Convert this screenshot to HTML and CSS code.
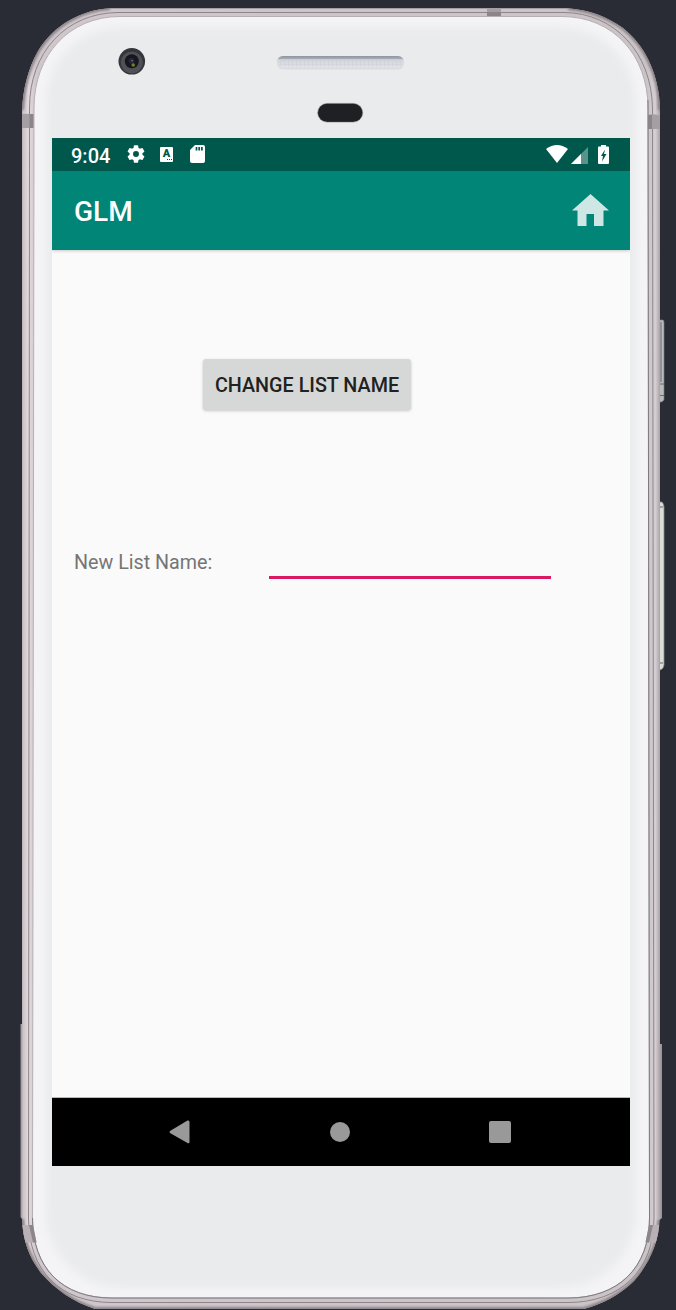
FILE: index.html
```html
<!DOCTYPE html>
<html lang="en">
<head>
<meta charset="utf-8">
<title>GLM</title>
<link rel="stylesheet" href="styles.css">
</head>
<body>
<main class="stage">
  <svg class="phone" viewBox="0 0 676 1310" aria-hidden="true">
    <defs>
      <linearGradient id="metal" x1="20" x2="662" y1="0" y2="0" gradientUnits="userSpaceOnUse">
        <stop offset="0" stop-color="#8f888d"/><stop offset=".005" stop-color="#cbc3c7"/><stop offset=".013" stop-color="#e3dadd"/><stop offset=".025" stop-color="#cfc7cb"/>
        <stop offset=".5" stop-color="#cdc4c8"/><stop offset=".976" stop-color="#cbc4c7"/><stop offset=".99" stop-color="#d5cdd1"/><stop offset="1" stop-color="#958e93"/>
      </linearGradient>
      <filter id="soft" x="-5%" y="-5%" width="110%" height="110%"><feGaussianBlur stdDeviation="4"/></filter>
      <filter id="edge" x="-5%" y="-5%" width="110%" height="110%"><feGaussianBlur stdDeviation="1.2"/></filter>
      <clipPath id="bodyClip"><path id="body" d="M110 8.300H568C590 10 607 17 623 28C634 37 642 47 648 59C655 73 660 91 660 110V1044H662V1218L659.500 1220C659 1242 649 1264 634 1281C620 1295 602 1304 584 1309H95C73 1302 55 1289 41 1273C29 1257 23 1241 22 1219L20.500 1217V1024H22V110C23 89 28 69 38 51C54 25 81 10 110 8.300Z"/></clipPath>
      <clipPath id="faceClip"><path d="M120 17H562C613 17 647.500 55 647.500 108L649 1218C649 1268 618 1297.500 568 1297.500H112C62 1297.500 33 1268 33 1218L34.500 108C34.500 55 69 17 120 17Z"/></clipPath>
      <linearGradient id="grille" x1="0" x2="0" y1="0" y2="1"><stop offset="0" stop-color="#8e959f"/><stop offset=".22" stop-color="#a5abb4"/><stop offset=".32" stop-color="#d3d5dc"/><stop offset="1" stop-color="#e2e3e8"/></linearGradient>
      <pattern id="mesh" width="4" height="4" patternUnits="userSpaceOnUse"><path d="M0 .5H4M.5 0V4" stroke="#ced0d8" stroke-width=".5"/></pattern>
    </defs>
    <path d="M657 320H663Q664 320 664 323V400Q662 403 657 402Z" fill="#b8bdbb" stroke="#777b7d" stroke-width=".7"/>
    <path d="M661 322V382M659.500 384H664M659.500 395.500H664" stroke="#656b6e"/>
    <path d="M657 502H662Q664 504 664 507V665Q663 671 657 670Z" fill="#d9ddd8" stroke="#85898a" stroke-width=".8"/>
    <path d="M659 507H663M659 663H663" stroke="#636467"/>
    <use href="#body" fill="url(#metal)"/>
    <g clip-path="url(#bodyClip)">
      <path d="M568 8C590 10 607 17 623 28C634 37 642 47 648 59C655 73 660 91 660 110M22 110C23 89 28 69 38 51C54 25 81 10 110 8M22 1219C23 1241 29 1257 41 1273C55 1289 73 1302 95 1309H584C602 1304 620 1295 634 1281C649 1264 659 1242 659.500 1220" fill="none" stroke="#8c8388" stroke-width="4" filter="url(#edge)"/>
    </g>
    <path d="M118 12.500H564C615 13 651.500 53 652.500 108L654 1218C654 1271 620 1302.500 568 1302.500H112C60 1302.500 28.500 1271 28.500 1218L29.500 108C29.500 52 66 13 118 12.500Z" fill="none" stroke="#8c858b"/>
    <path d="M120 16.500H562C613 16.500 648 55 648 108L649.500 1218C649.500 1268 618 1298 568 1298H112C62 1298 32.500 1268 32.500 1218L34 108C34 55 69 16.500 120 16.500Z" fill="#f4f4f6" stroke="#b5aeb3"/>
    <path d="M648 100L649.500 1218C649.500 1268 618 1298 568 1298H112C62 1298 32.500 1268 32.500 1218" fill="none" stroke="#77747a" stroke-width=".9"/>
    <g clip-path="url(#faceClip)"><rect x="46" y="27" width="590" height="1261" rx="76" fill="#eaebed" filter="url(#soft)"/></g>
    <g clip-path="url(#bodyClip)">
      <path d="M22 114Q28 113 33 115V128H22ZM648 115Q653 113 661 116V129H648ZM487 9H501V16H487Z" fill="#a59fa4"/>
      <path d="M29.500 114H33.500V128H29.500ZM648 115H652V129H648ZM487 12H501V16H487Z" fill="#8b858a"/>
      <path d="M20 1225H33L36.500 1242.500H20ZM662 1225H649L645.500 1242.500H662Z" fill="#b8b0b5"/>
      <path d="M29 1225H33L36.500 1242.500H33ZM653 1225H649L645.500 1242.500H649Z" fill="#8d858a"/>
    </g>
    <circle cx="131.800" cy="61.300" r="13.300" fill="#34363b"/>
    <circle cx="131.800" cy="62.500" r="10.800" fill="#505157"/>
    <circle cx="131.800" cy="61.300" r="7" fill="#15171c"/>
    <circle cx="131.500" cy="60.700" r="3" fill="#242638"/>
    <circle cx="133.200" cy="65" r="1.800" fill="#777b25"/>
    <path d="M131 60.500L133 61" stroke="#65718d"/>
    <rect x="277" y="57" width="127" height="12.500" rx="6" fill="#dadcdf"/>
    <rect x="277" y="56" width="127" height="11.500" rx="5.750" fill="url(#grille)"/>
    <rect x="279" y="60" width="123" height="6.500" rx="3" fill="url(#mesh)"/>
    <rect x="317.700" y="103.400" width="45" height="18.700" rx="9.350" fill="#1e2023" stroke="#77797b" stroke-width=".5"/>
  </svg>
  <section class="screen">
    <header class="status">
      <span class="time">9:04</span>
      <svg class="gear" viewBox="2 2 20 20"><path fill="#fff" d="M19.140 12.940a7.500 7.500 0 0 0 0-1.880l2.030-1.580a.5.5 0 0 0 .12-.61l-1.920-3.320a.5.5 0 0 0-.59-.22l-2.390.96a7 7 0 0 0-1.620-.94l-.36-2.540A.5.500 0 0 0 13.920 2.400h-3.840a.5.5 0 0 0-.48.410l-.36 2.540a7 7 0 0 0-1.620.94l-2.390-.96a.5.5 0 0 0-.59.220L2.720 8.870a.5.5 0 0 0 .12.610l2.030 1.580a7.500 7.500 0 0 0 0 1.880l-2.030 1.580a.5.5 0 0 0-.12.610l1.920 3.320c.12.220.37.290.59.220l2.390-.96c.5.380 1.030.7 1.620.94l.36 2.540c.05.240.24.410.48.410h3.840c.24 0 .44-.17.47-.41l.36-2.540a7 7 0 0 0 1.620-.94l2.390.96c.22.080.47 0 .59-.22l1.920-3.320a.5.5 0 0 0-.12-.61ZM12 15.300a3.300 3.300 0 1 1 0-6.600 3.300 3.300 0 0 1 0 6.600Z"/></svg>
      <span class="keyboard"><b>A</b><svg viewBox="0 0 13 2"><path d="M7 .5H8M9 .5H10M11 .5H12" stroke="#00574b"/></svg></span>
      <svg class="card" viewBox="0 0 15 18"><path d="M5 0H13Q15 0 15 2V16Q15 18 13 18H2Q0 18 0 16V5Z" fill="#fff"/><path d="M6.500 2V5.500M9.200 2V5.500M11.900 2V5.500" stroke="#00574b" stroke-width="1.700"/></svg>
      <svg class="wifi" viewBox="0 0 22 18"><path d="M0 4Q11-4 22 4L11 18Z" fill="#fff"/></svg>
      <svg class="signal" viewBox="0 0 17 17"><path d="M0 17L17 0V17Z" fill="#58948b"/><path d="M0 17L10 7V17Z" fill="#fff"/></svg>
      <svg class="battery" viewBox="0 0 11 19"><path d="M3 0H8V1.500H10Q11 1.500 11 2.500V18Q11 19 10 19H1Q0 19 0 18V2.500Q0 1.500 1 1.500H3Z" fill="#fff"/><path d="M7 4.500L3 11H5L4 16.500L8.500 9H6Z" fill="#00574b"/></svg>
    </header>
    <div class="toolbar">
      <h1>GLM</h1>
      <svg class="home" viewBox="0 0 37 33"><path d="M18.500 0L37 16.500H31.500V32H22V20H14.500V32H5.500V16.500H0Z" fill="#cfe7e4"/></svg>
    </div>
    <div class="content">
      <button class="change">CHANGE LIST NAME</button>
      <label class="field"><span>New List Name:</span><input aria-label="New List Name"></label>
    </div>
    <nav class="nav">
      <svg class="back" viewBox="0 0 21 24"><path d="M1 11L18.500.5Q20.500 0 20.500 2V22Q20.500 24 18.500 23L1 13Q0 12 1 11Z" fill="#999"/></svg>
      <span class="circle"></span>
      <span class="square"></span>
    </nav>
  </section>
</main>
</body>
</html>
```
FILE: styles.css
```css
* { box-sizing: border-box; }
body { margin: 0; background: #292c35; font-family: Roboto, "Liberation Sans", sans-serif; }
svg { display: block; flex: none; }
.stage { display: grid; width: 676px; height: 1310px; overflow: hidden; }
.phone, .screen { grid-area: 1 / 1; }
.phone { width: 676px; height: 1310px; }
.screen { z-index: 1; width: 578px; height: 1028px; margin: 138px 0 0 52px; display: flex; flex-direction: column; background: #fafafa; }
.status { height: 33px; flex: none; display: flex; align-items: center; padding: 0 21px 1px 19px; background: #00574b; color: #fff; }
.time { width: 56px; padding-top: 3px; font-size: 20px; line-height: 32px; font-weight: 500; white-space: nowrap; }
.gear { width: 18px; height: 18px; }
.keyboard { width: 13px; height: 15px; margin-left: 15px; border-radius: 1px; background: #fff; color: #00574b; display: flex; flex-direction: column; align-items: center; }
.keyboard b { height: 12px; font-size: 11px; line-height: 13px; font-weight: 900; }
.keyboard svg { width: 13px; height: 2px; }
.card { width: 15px; height: 18px; margin-left: 17px; }
.wifi { width: 22px; height: 18px; margin: 0 0 0 auto; }
.signal { width: 17px; height: 17px; margin: 2px 10px 0 3px; }
.battery { width: 11px; height: 19px; }
.toolbar { z-index: 1; height: 78.500px; flex: none; display: flex; align-items: center; justify-content: space-between; padding: 0 21px 0 22px; background: #008577; box-shadow: 0 1px 3px #0003; clip-path: inset(0 0 -6px 0); }
h1 { margin: 4px 0 0; color: #fff; font-size: 28px; line-height: 34px; font-weight: 500; }
.home { width: 37px; height: 33px; }
.content { flex: 1; display: flex; flex-direction: column; align-items: flex-start; padding: 109.500px 0 0 22px; }
.change { width: 208px; height: 51px; margin-left: 129px; padding: 3px 0 0; border: 0; border-radius: 3px; background: #d6d8d7; box-shadow: 0 1px 3px #0003; color: #202121; font: 500 19.750px/24px Roboto, sans-serif; white-space: nowrap; }
.field { display: flex; margin-top: 138px; color: #757575; font-size: 19.700px; line-height: 28px; }
.field span { width: 195px; padding-top: 1px; white-space: nowrap; }
.field input { width: 282px; height: 31px; padding: 0; border: 0; border-bottom: 3px solid #d81b60; background: transparent; outline: 0; }
.nav { height: 68px; flex: none; display: flex; align-items: center; justify-content: space-between; padding: 0 119px 1px 117px; background: #000; box-shadow: 0 -1px #b8b8b8; }
.back { width: 21px; height: 24px; }
.circle { width: 20px; height: 20px; margin-left: 1px; border-radius: 50%; background: #999; }
.square { width: 22px; height: 22px; border-radius: 2px; background: #999; }
```
